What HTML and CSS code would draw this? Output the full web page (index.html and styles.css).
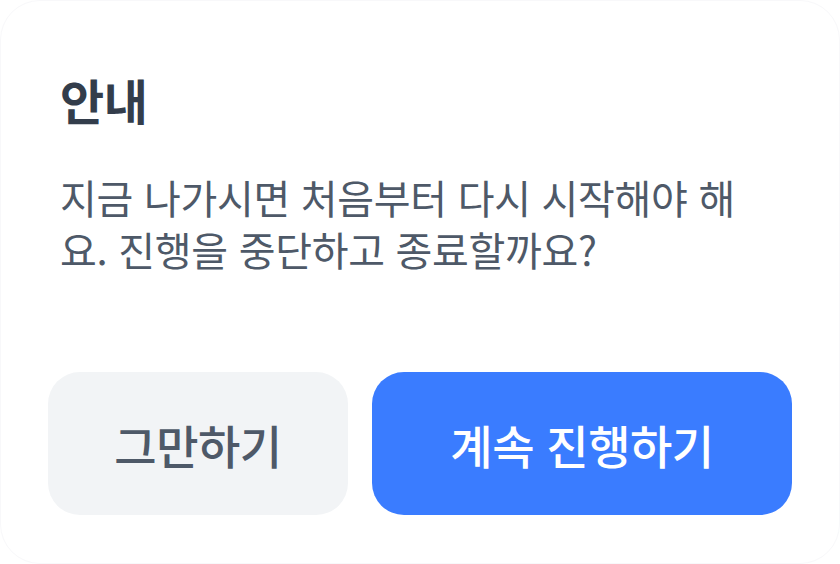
FILE: index.html
```html
<!DOCTYPE html>
<html lang="ko">
<head>
<meta charset="utf-8">
<link rel="stylesheet" href="styles.css">
</head>
<body>
<div class="dialog">
  <div class="content">
    <h1 class="title">안내</h1>
    <p class="desc">지금 나가시면 처음부터 다시 시작해야 해요. 진행을 중단하고 종료할까요?</p>
  </div>
  <div class="actions">
    <button class="btn btn-secondary">그만하기</button>
    <button class="btn btn-primary">계속 진행하기</button>
  </div>
</div>
</body>
</html>
```
FILE: styles.css
```css
html, body {
  margin: 0;
  padding: 0;
  background: #ffffff;
}
body {
  font-family: "Noto Sans CJK KR", "Noto Sans", sans-serif;
}
.dialog {
  box-sizing: border-box;
  width: 840px;
  height: 564px;
  border-radius: 40px;
  border: 1px solid #f8f8fa;
  background: #ffffff;
  display: flex;
  flex-direction: column;
  justify-content: space-between;
}
.content {
  padding: 68px 59px 0 59px;
}
.title {
  margin: 0;
  font-size: 48px;
  line-height: 60px;
  font-weight: 700;
  color: #333d4b;
  letter-spacing: -0.5px;
}
.desc {
  margin: 42px 0 0 0;
  font-size: 40px;
  line-height: 52px;
  font-weight: 400;
  color: #4e5968;
  letter-spacing: -0.3px;
}
.actions {
  display: grid;
  grid-template-columns: 300px 420px;
  gap: 24px;
  padding: 0 47px 48px 47px;
}
.btn {
  height: 143px;
  border: none;
  border-radius: 32px;
  font-family: inherit;
  font-size: 46px;
  font-weight: 500;
  letter-spacing: -0.5px;
}
.btn-secondary {
  background: #f2f4f6;
  color: #4e5968;
}
.btn-primary {
  background: #3a7cff;
  color: #ffffff;
}
```
